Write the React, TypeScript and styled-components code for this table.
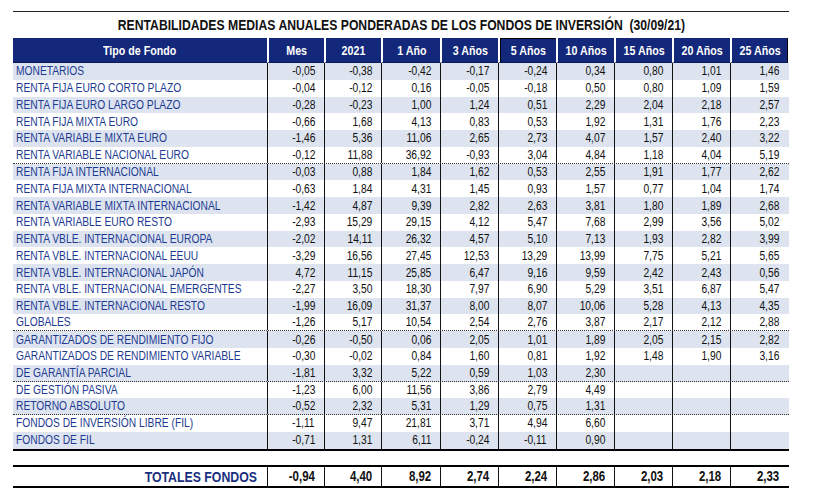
import React from "react";
import styled, { createGlobalStyle } from "styled-components";

const FONT = `"Liberation Sans", Arial, sans-serif`;

const Global = createGlobalStyle`
  html, body { margin: 0; padding: 0; background: #ffffff; }
  body { font-family: ${FONT}; }
`;

const COLS = "254px 57px 57px 59px 58px 58px 58px 58px 58px 58px";

/* Arial Narrow is not installed: Liberation Sans squeezed horizontally stands in for it */
const Narrow = styled.span<{ $origin: "left" | "right" | "center"; $scale?: number }>`
  display: inline-block;
  white-space: pre;
  transform: scaleX(${(p) => p.$scale ?? 0.82});
  transform-origin: ${(p) => p.$origin} center;
`;

const Page = styled.div`
  padding: 11px 0 0 13px;
  width: 776px;
`;

const TopRule = styled.div`
  height: 1px;
  background: #222;
`;

const Title = styled.h1`
  margin: 0;
  height: 26px;
  display: flex;
  align-items: center;
  justify-content: center;
  font-family: ${FONT};
  font-weight: 700;
  font-size: 15.5px;
  color: #111;
`;

const HeaderRow = styled.div`
  display: grid;
  grid-template-columns: ${COLS};
  height: 25px;
`;

const HeaderCell = styled.div<{ $first?: boolean; $outlined?: boolean; $edge?: boolean }>`
  background: #13287a;
  color: #ffffff;
  font-weight: 700;
  font-size: 13px;
  display: flex;
  align-items: center;
  justify-content: center;
  border-left: ${(p) => (p.$first ? "0" : "2px solid #ffffff")};
  border-bottom: 1px solid #0a1a55;
  box-shadow: ${(p) =>
    p.$outlined ? "inset 1px 1px 0 #000" : p.$edge ? "inset -1px 0 0 #000" : "none"};
`;

const DataRow = styled.div<{ $shaded: boolean; $dotted: boolean }>`
  display: grid;
  grid-template-columns: ${COLS};
  height: 16.78px;
  box-sizing: border-box;
  background: ${(p) => (p.$shaded ? "#dde4ef" : "#ffffff")};
  border-bottom: ${(p) => (p.$dotted ? "1px dotted #333" : "0")};
  font-size: 12.5px;
  line-height: 16px;
`;

const LabelCell = styled.div`
  color: #1c3a92;
  padding-left: 3px;
  white-space: nowrap;
  display: flex;
  align-items: center;
`;

const NumCell = styled.div`
  color: #111;
  padding-right: 9px;
  border-left: 1px solid #111;
  display: flex;
  align-items: center;
  justify-content: flex-end;
`;

const EndRule = styled.div`
  height: 2px;
  background: #000;
`;

const Spacer = styled.div`
  height: 14px;
`;

const TotalsRow = styled.div`
  display: grid;
  grid-template-columns: ${COLS};
  height: 19px;
  border-top: 2px solid #000;
  border-bottom: 2px solid #000;
`;

const TotalLabel = styled.div`
  color: #1a2f80;
  font-weight: 700;
  font-size: 15px;
  padding-right: 10px;
  display: flex;
  align-items: center;
  justify-content: flex-end;
`;

const TotalNum = styled.div`
  color: #111;
  font-weight: 700;
  font-size: 14px;
  border-left: 1px solid #111;
  padding-right: 9px;
  display: flex;
  align-items: center;
  justify-content: flex-end;
`;

const HEADERS = ["Mes", "2021", "1 Año", "3 Años", "5 Años", "10 Años", "15 Años", "20 Años", "25 Años"];

const ROWS: string[][] = [
  ["MONETARIOS", "-0,05", "-0,38", "-0,42", "-0,17", "-0,24", "0,34", "0,80", "1,01", "1,46"],
  ["RENTA FIJA EURO CORTO PLAZO", "-0,04", "-0,12", "0,16", "-0,05", "-0,18", "0,50", "0,80", "1,09", "1,59"],
  ["RENTA FIJA EURO LARGO PLAZO", "-0,28", "-0,23", "1,00", "1,24", "0,51", "2,29", "2,04", "2,18", "2,57"],
  ["RENTA FIJA MIXTA EURO", "-0,66", "1,68", "4,13", "0,83", "0,53", "1,92", "1,31", "1,76", "2,23"],
  ["RENTA VARIABLE MIXTA EURO", "-1,46", "5,36", "11,06", "2,65", "2,73", "4,07", "1,57", "2,40", "3,22"],
  ["RENTA VARIABLE NACIONAL EURO", "-0,12", "11,88", "36,92", "-0,93", "3,04", "4,84", "1,18", "4,04", "5,19"],
  ["RENTA FIJA INTERNACIONAL", "-0,03", "0,88", "1,84", "1,62", "0,53", "2,55", "1,91", "1,77", "2,62"],
  ["RENTA FIJA MIXTA INTERNACIONAL", "-0,63", "1,84", "4,31", "1,45", "0,93", "1,57", "0,77", "1,04", "1,74"],
  ["RENTA VARIABLE MIXTA INTERNACIONAL", "-1,42", "4,87", "9,39", "2,82", "2,63", "3,81", "1,80", "1,89", "2,68"],
  ["RENTA VARIABLE EURO RESTO", "-2,93", "15,29", "29,15", "4,12", "5,47", "7,68", "2,99", "3,56", "5,02"],
  ["RENTA VBLE. INTERNACIONAL EUROPA", "-2,02", "14,11", "26,32", "4,57", "5,10", "7,13", "1,93", "2,82", "3,99"],
  ["RENTA VBLE. INTERNACIONAL EEUU", "-3,29", "16,56", "27,45", "12,53", "13,29", "13,99", "7,75", "5,21", "5,65"],
  ["RENTA VBLE. INTERNACIONAL JAPÓN", "4,72", "11,15", "25,85", "6,47", "9,16", "9,59", "2,42", "2,43", "0,56"],
  ["RENTA VBLE. INTERNACIONAL EMERGENTES", "-2,27", "3,50", "18,30", "7,97", "6,90", "5,29", "3,51", "6,87", "5,47"],
  ["RENTA VBLE. INTERNACIONAL RESTO", "-1,99", "16,09", "31,37", "8,00", "8,07", "10,06", "5,28", "4,13", "4,35"],
  ["GLOBALES", "-1,26", "5,17", "10,54", "2,54", "2,76", "3,87", "2,17", "2,12", "2,88"],
  ["GARANTIZADOS DE RENDIMIENTO FIJO", "-0,26", "-0,50", "0,06", "2,05", "1,01", "1,89", "2,05", "2,15", "2,82"],
  ["GARANTIZADOS DE RENDIMIENTO VARIABLE", "-0,30", "-0,02", "0,84", "1,60", "0,81", "1,92", "1,48", "1,90", "3,16"],
  ["DE GARANTÍA PARCIAL", "-1,81", "3,32", "5,22", "0,59", "1,03", "2,30", "", "", ""],
  ["DE GESTIÓN PASIVA", "-1,23", "6,00", "11,56", "3,86", "2,79", "4,49", "", "", ""],
  ["RETORNO ABSOLUTO", "-0,52", "2,32", "5,31", "1,29", "0,75", "1,31", "", "", ""],
  ["FONDOS DE INVERSIÓN LIBRE (FIL)", "-1,11", "9,47", "21,81", "3,71", "4,94", "6,60", "", "", ""],
  ["FONDOS DE FIL", "-0,71", "1,31", "6,11", "-0,24", "-0,11", "0,90", "", "", ""],
];

const DOTTED = new Set([5, 15, 18, 20]);

const TOTALS = ["-0,94", "4,40", "8,92", "2,74", "2,24", "2,86", "2,03", "2,18", "2,33"];

export default function App() {
  return (
    <>
      <Global />
      <Page>
        <TopRule />
        <Title>
          <Narrow $origin="center" $scale={0.787}>
            {"RENTABILIDADES MEDIAS ANUALES PONDERADAS DE LOS FONDOS DE INVERSIÓN  (30/09/21)"}
          </Narrow>
        </Title>
        <HeaderRow>
          <HeaderCell $first>
            <Narrow $origin="center">Tipo de Fondo</Narrow>
          </HeaderCell>
          {HEADERS.map((h) => (
            <HeaderCell key={h} $outlined={h === "5 Años"} $edge={h === "25 Años"}>
              <Narrow $origin="center">{h}</Narrow>
            </HeaderCell>
          ))}
        </HeaderRow>
        {ROWS.map((r, i) => (
          <DataRow key={r[0]} $shaded={i % 2 === 0} $dotted={DOTTED.has(i)}>
            <LabelCell>
              <Narrow $origin="left">{r[0]}</Narrow>
            </LabelCell>
            {r.slice(1).map((v, j) => (
              <NumCell key={j}>
                <Narrow $origin="right">{v}</Narrow>
              </NumCell>
            ))}
          </DataRow>
        ))}
        <EndRule />
        <Spacer />
        <TotalsRow>
          <TotalLabel>
            <Narrow $origin="right">TOTALES FONDOS</Narrow>
          </TotalLabel>
          {TOTALS.map((v, j) => (
            <TotalNum key={j}>
              <Narrow $origin="right">{v}</Narrow>
            </TotalNum>
          ))}
        </TotalsRow>
      </Page>
    </>
  );
}
